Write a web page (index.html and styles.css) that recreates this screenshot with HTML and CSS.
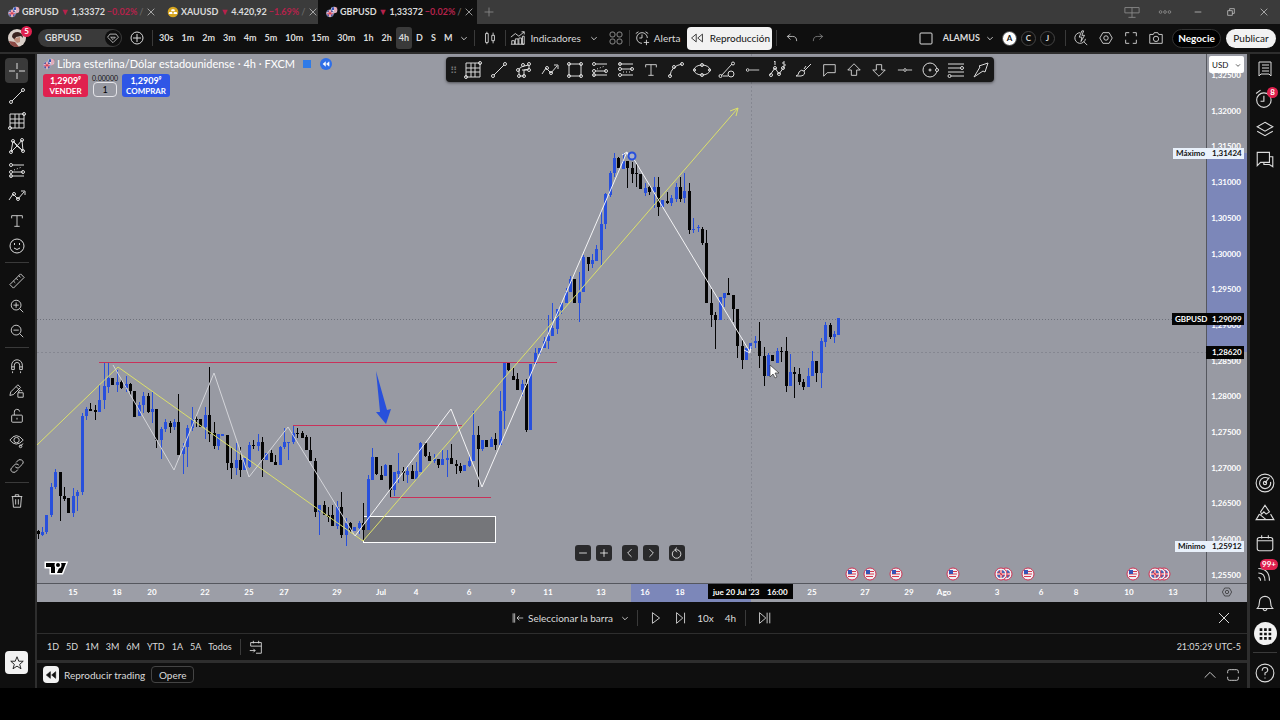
FILE: index.html
```
<!DOCTYPE html>
<html lang="es">
<head>
  <meta charset="UTF-8" />
  <title>GBPUSD 1,33372 −0.02% / ALAMUS</title>
  <meta name="viewport" content="width=device-width, initial-scale=1.0" />
  <link rel="stylesheet" href="styles.css">
</head>
<body>

  <!-- icon sprite -->
  <svg class="sprite" aria-hidden="true">
    <symbol id="close" viewBox="0 0 18 18"><path d="M4 4l10 10M14 4L4 14"/></symbol>
    <symbol id="plus" viewBox="0 0 18 18"><path d="M9 4v10M4 9h10"/></symbol>
    <symbol id="minus" viewBox="0 0 18 18"><path d="M4 9h10"/></symbol>
    <symbol id="chevron" viewBox="0 0 18 18"><path d="M6 8l3 3 3-3"/></symbol>
    <symbol id="flags" viewBox="0 0 18 18">
      <circle cx="12" cy="6" r="5" fill="#e8e8f0" stroke="none"/><path d="M12 3h5M12 6h5M12 9h4" stroke="#d8384e"/><path d="M9 2h3v4H8z" fill="#3553b5" stroke="none"/>
      <circle cx="6" cy="11" r="5.500" fill="#3d5ab0" stroke="#ddd" stroke-width=".5"/><path d="M6 6v10M1 11h10" stroke="#fff" stroke-width="3"/><path d="M6 6v10M1 11h10M3 8l6 6M9 8l-6 6" stroke="#d8384e" stroke-width="1.300"/>
    </symbol>
    <symbol id="gold" viewBox="0 0 18 18"><circle cx="9" cy="9" r="8" fill="#d6a520" stroke="none"/><path d="M7 5h4l1 3H6zM3.500 9h4l1 3h-6zM10.500 9h4l1 3h-6z" fill="#fff" stroke="none"/></symbol>
    <symbol id="gem" viewBox="0 0 18 18"><path d="M5 4h8l3 4-7 7-7-7zM6 8l3 3 3-3z"/></symbol>
    <symbol id="circle-plus" viewBox="0 0 18 18"><circle cx="9" cy="9" r="6"/><path d="M9 5v8M5 9h8"/></symbol>
    <symbol id="candles" viewBox="0 0 18 18"><path d="M4 4h3v10H4zM5.500 2v2M5.500 14v2M11 6h3v6h-3zM12.500 3v3M12.500 12v3"/></symbol>
    <symbol id="indicators" viewBox="0 0 18 18"><path d="M2 16v-4h3v4M6 16v-6h3v6M10 16V9h3v7M14 16V7h2v9zM1 8l5-4 4 3 6-5M13 2h3v3M1 16h15"/></symbol>
    <symbol id="layouts" viewBox="0 0 18 18"><rect x="3" y="3" width="5" height="5" rx="2"/><rect x="10" y="3" width="5" height="5" rx="2"/><rect x="3" y="10" width="5" height="5" rx="2"/><rect x="10" y="10" width="5" height="5" rx="2"/></symbol>
    <symbol id="alarm-add" viewBox="0 0 18 18"><path d="M15 9a6 6 0 1 0-6 6M9 5v4H6M2 4l3-2M13 2l3 2M14 11v6M11 14h6"/></symbol>
    <symbol id="rewind" viewBox="0 0 18 18"><path d="M8 4v10L2 9zM16 4v10l-6-5z"/></symbol>
    <symbol id="undo" viewBox="0 0 18 18"><path d="M7 4L3 7l4 4M3 7h7q5 0 5 6"/></symbol>
    <symbol id="redo" viewBox="0 0 18 18"><path d="M11 4l4 3-4 4M15 7H8q-5 0-5 6"/></symbol>
    <symbol id="square" viewBox="0 0 18 18"><rect x="3" y="4" width="12" height="11" rx="1"/></symbol>
    <symbol id="quick-search" viewBox="0 0 18 18"><path d="M8 3a6 6 0 1 0 6 7M12 13l4 4M10 1L7 8h3l-1 5 4-7h-3l2-5z"/></symbol>
    <symbol id="hexagon" viewBox="0 0 18 18"><path d="M5.500 3h7L16 9l-3.500 6h-7L2 9z"/><circle cx="9" cy="9" r="2.500"/></symbol>
    <symbol id="fullscreen" viewBox="0 0 18 18"><path d="M3 7V3h4M11 3h4v4M15 11v4h-4M7 15H3v-4"/></symbol>
    <symbol id="camera" viewBox="0 0 18 18"><path d="M2 5h4l1-2h4l1 2h4v10H2z"/><circle cx="9" cy="10" r="3"/></symbol>
    <symbol id="cross" viewBox="0 0 18 18"><path d="M9 1v6M9 11v6M1 9h6M11 9h6"/></symbol>
    <symbol id="trend" viewBox="0 0 18 18"><circle cx="3" cy="15" r="1.500"/><circle cx="15" cy="3" r="1.500"/><path d="M4 14L14 4"/></symbol>
    <symbol id="grid" viewBox="0 0 18 18"><path d="M2 2h14v14H2zM7 2v14M11 2v14M2 7h14M2 11h14"/><circle cx="16" cy="2" r="1.500"/><circle cx="2" cy="16" r="1.500"/></symbol>
    <symbol id="pattern" viewBox="0 0 18 18"><path d="M3 15L5 4l4 5 5-6 1 11-6-5zM5 4l10 10"/><circle cx="3" cy="15" r="1.500"/><circle cx="5" cy="4" r="1.500"/><circle cx="14" cy="3" r="1.500"/><circle cx="15" cy="14" r="1.500"/></symbol>
    <symbol id="forecast" viewBox="0 0 18 18"><path d="M4 3h12M4 10h11M2 14h14"/><path d="M6 8l8-3" stroke-dasharray="1 2"/><circle cx="3" cy="3" r="1.500"/><circle cx="3" cy="10" r="1.500"/><circle cx="15" cy="10" r="1.500"/><circle cx="3" cy="14" r="1.500"/></symbol>
    <symbol id="short-pos" viewBox="0 0 18 18"><path d="M2 3h14M4 8h11M4 14h12"/><path d="M6 11h9" stroke-dasharray="1 2"/><circle cx="3" cy="3" r="1.500"/><circle cx="3" cy="8" r="1.500"/><circle cx="15" cy="8" r="1.500"/><circle cx="3" cy="14" r="1.500"/></symbol>
    <symbol id="path" viewBox="0 0 18 18"><path d="M1 13l4-6 5 5 6-7M13 4h4v4"/><circle cx="6" cy="7" r="1.500"/><circle cx="10" cy="12" r="1.500"/></symbol>
    <symbol id="text" viewBox="0 0 18 18"><path d="M3 6V3h12v3M9 3v12M6 15h6"/></symbol>
    <symbol id="smile" viewBox="0 0 18 18"><circle cx="9" cy="9" r="7"/><path d="M6 11q3 3 6 0M6.500 6v2M11.500 6v2"/></symbol>
    <symbol id="ruler" viewBox="0 0 18 18"><path d="M1 13L13 1l4 4L5 17zM5 9l2 2M8 6l2 2M11 3l2 2"/></symbol>
    <symbol id="zoom-in" viewBox="0 0 18 18"><circle cx="8" cy="8" r="5.500"/><path d="M12 12l4 4M8 5v6M5 8h6"/></symbol>
    <symbol id="zoom-out" viewBox="0 0 18 18"><circle cx="8" cy="8" r="5.500"/><path d="M12 12l4 4M5 8h6"/></symbol>
    <symbol id="magnet" viewBox="0 0 18 18"><path d="M3 13V8a6 6 0 0 1 12 0v5h-3V8a3 3 0 0 0-6 0v5zM3 10h3M12 10h3M4 15v2M13 15v2"/></symbol>
    <symbol id="pencil-lock" viewBox="0 0 18 18"><path d="M1 14l1-4 8-8 3 3-8 8zM8 4l3 3M10 11h6v5h-6zM11 11V9q2-2 4 0"/></symbol>
    <symbol id="lock" viewBox="0 0 18 18"><rect x="3" y="8" width="12" height="8" rx="1"/><path d="M6 8V5a3 3 0 0 1 6-1M9 11v2"/></symbol>
    <symbol id="eye" viewBox="0 0 18 18"><path d="M1 8q7-10 15 0-8 9-15 0zM12 15l4-3"/><circle cx="8.500" cy="8" r="3"/><circle cx="13" cy="15" r="1.500"/></symbol>
    <symbol id="link" viewBox="0 0 18 18"><path d="M8 5l3-3q3-1 5 2 0 2-1 3l-4 4q-2 1-4-1M10 13l-3 3q-3 1-5-2 0-2 1-3l4-4q2-1 4 1"/></symbol>
    <symbol id="trash" viewBox="0 0 18 18"><path d="M3 4h12M7 4V2h4v2M4 4l1 12h8l1-12M7.500 7v6M10.500 7v6"/></symbol>
    <symbol id="star" viewBox="0 0 18 18"><path d="M9 2l2 5h5l-4 3.500 1.500 5L9 12.500l-4.500 3 1.500-5L2 7h5z"/></symbol>
    <symbol id="flowchart" viewBox="0 0 18 18"><path d="M4 14V9q0-3 5-4l5-1v4l-5 1v6H4M7 9h5"/><circle cx="8" cy="4" r="1.500"/><circle cx="14" cy="3" r="1.500"/><circle cx="14" cy="9" r="1.500"/><circle cx="3" cy="9" r="1.500"/><circle cx="4" cy="15" r="1.500"/><circle cx="9" cy="15" r="1.500"/></symbol>
    <symbol id="rect" viewBox="0 0 18 18"><path d="M3 3h12v12H3z"/><circle cx="3" cy="3" r="1.500"/><circle cx="15" cy="3" r="1.500"/><circle cx="3" cy="15" r="1.500"/><circle cx="15" cy="15" r="1.500"/></symbol>
    <symbol id="curve" viewBox="0 0 18 18"><path d="M3 15Q4 5 15 3"/><circle cx="3" cy="15" r="1.500"/><circle cx="7" cy="6" r="1.500"/><circle cx="15" cy="3" r="1.500"/></symbol>
    <symbol id="ellipse" viewBox="0 0 18 18"><ellipse cx="9" cy="9" rx="8" ry="5"/><circle cx="1.500" cy="9" r="1.200"/><circle cx="16.500" cy="9" r="1.200"/><circle cx="9" cy="4" r="1.500"/><circle cx="9" cy="14" r="1.500"/></symbol>
    <symbol id="trend-angle" viewBox="0 0 18 18"><path d="M3 15L14 3M5 15h5"/><circle cx="2.500" cy="15" r="1.500"/><circle cx="15" cy="2.500" r="1.500"/><circle cx="13" cy="13" r="3"/></symbol>
    <symbol id="ray" viewBox="0 0 18 18"><circle cx="3" cy="9" r="1.500"/><path d="M5 9h11"/></symbol>
    <symbol id="elliott" viewBox="0 0 18 18"><path d="M1 14l5-7 4 6 5-7M5 1l1-1v4M14 1h2M14 1v2h2v2h-2"/><circle cx="2" cy="14" r="1.500"/><circle cx="6" cy="7" r="1.500"/><circle cx="10" cy="13" r="1.500"/><circle cx="14" cy="7" r="1.500"/></symbol>
    <symbol id="brush" viewBox="0 0 18 18"><path d="M2 15q3-1 3-4 2-3 5-1 2 4-3 5zM10 10l7-7M10 8l2-3"/></symbol>
    <symbol id="callout" viewBox="0 0 18 18"><path d="M3 3h13v9H7l-4 4z"/></symbol>
    <symbol id="arrow-up" viewBox="0 0 18 18"><path d="M9 2l7 7h-4v6H6V9H2z"/></symbol>
    <symbol id="arrow-down" viewBox="0 0 18 18"><path d="M9 16l7-7h-4V3H6v6H2z"/></symbol>
    <symbol id="hline" viewBox="0 0 18 18"><circle cx="9" cy="9" r="1.500"/><path d="M1 9h6M11 9h6"/></symbol>
    <symbol id="circle-tool" viewBox="0 0 18 18"><circle cx="9" cy="9" r="7"/><circle cx="9" cy="9" r="1"/><circle cx="16" cy="9" r="1.500" fill="#181818"/></symbol>
    <symbol id="fib" viewBox="0 0 18 18"><path d="M1 3h16M1 7h13M1 11h16M4 15h13"/><circle cx="15" cy="7" r="1.500"/><circle cx="2.500" cy="15" r="1.500"/></symbol>
    <symbol id="arrow-draw" viewBox="0 0 18 18"><path d="M2 16l6-10-1-1 9-3-3 9-2-1z"/></symbol>
    <symbol id="notes" viewBox="0 0 18 18"><path d="M3 2h12v14l-2-2h-8l-2 2zM6 5h7M6 8h7M6 11h7"/></symbol>
    <symbol id="alarm" viewBox="0 0 18 18"><circle cx="8" cy="10" r="6.500"/><path d="M8 6v5H5M1 4l4-3M12 1l4 3"/></symbol>
    <symbol id="layers" viewBox="0 0 18 18"><path d="M9 3l7 4-7 4-7-4zM2 11l7 4 7-4"/></symbol>
    <symbol id="chats" viewBox="0 0 18 18"><path d="M2 3h11v9H5l-3 3zM13 7h3v9l-3-2H8v-2"/></symbol>
    <symbol id="target" viewBox="0 0 18 18"><circle cx="9" cy="9" r="8"/><path d="M12 5a5 5 0 1 0 2 3M9 9l4-5"/><circle cx="9" cy="9" r="1.500"/></symbol>
    <symbol id="pyramid" viewBox="0 0 18 18"><path d="M9 2l4 6-3 2-2-2-2 2-1-2zM4 10l-3 5h16l-3-5M4 10l6 5"/></symbol>
    <symbol id="calendar" viewBox="0 0 18 18"><rect x="2" y="4" width="14" height="12" rx="2"/><path d="M2 7h14M6 2v3M12 2v3"/></symbol>
    <symbol id="stream" viewBox="0 0 18 18"><path d="M3 13q2 0 2 3M3 9q6 0 6 7M3 5q10 0 10 11"/></symbol>
    <symbol id="bell" viewBox="0 0 18 18"><path d="M2 14q2-2 2-6a5 5 0 0 1 10 0q0 4 2 6zM7 14q2 4 4 0"/></symbol>
    <symbol id="apps" viewBox="0 0 18 18"><path d="M3 4h3M8 4h3M13 4h3M3 9h3M8 9h3M13 9h3M3 14h3M8 14h3M13 14h3" stroke-width="3"/></symbol>
    <symbol id="help" viewBox="0 0 18 18"><circle cx="9" cy="9" r="8"/><path d="M6.500 7q0-3 2.500-3t2.500 2.500Q11.500 8 9 9v2M9 13v1"/></symbol>
    <symbol id="select-bar" viewBox="0 0 18 18"><path d="M4 3v12M6 3v12M17 9H9M12 6L9 9l3 3"/></symbol>
    <symbol id="play" viewBox="0 0 18 18"><path d="M5 3v12l8-6z"/></symbol>
    <symbol id="step" viewBox="0 0 18 18"><path d="M4 3v12l7-6zM13 3v12"/></symbol>
    <symbol id="to-end" viewBox="0 0 18 18"><path d="M4 3v12l7-6zM12.500 3v12M15.500 3v12"/></symbol>
    <symbol id="goto" viewBox="0 0 18 18"><path d="M3 8V4h12v12h-6M3 8h12M6 2v3M12 2v3M2 13h6M6 11l2 2-2 2"/></symbol>
    <symbol id="left" viewBox="0 0 18 18"><path d="M11 4L6 9l5 5"/></symbol>
    <symbol id="right" viewBox="0 0 18 18"><path d="M7 4l5 5-5 5"/></symbol>
    <symbol id="reset" viewBox="0 0 18 18"><path d="M5 6a5.500 5.500 0 1 0 5-1H6M9 2L6 5l3 3"/></symbol>
    <symbol id="up" viewBox="0 0 18 18"><path d="M3 12l6-6 6 6"/></symbol>
    <symbol id="maximize" viewBox="0 0 18 18"><path d="M3 7V5q0-2 2-2h2M11 3h2q2 0 2 2v2M15 11v2q0 2-2 2h-2M7 15H5q-2 0-2-2v-2M7 3h4M7 15h4"/></symbol>
    <symbol id="split" viewBox="0 0 18 18"><path d="M1 4h16v6H1zM9 4v11M5 15h8"/></symbol>
    <symbol id="dots" viewBox="0 0 18 18"><circle cx="4" cy="9" r="1.500"/><circle cx="9" cy="9" r="1.500"/><circle cx="14" cy="9" r="1.500"/></symbol>
    <symbol id="restore" viewBox="0 0 18 18"><path d="M4 7h7v7H4zM7 7V4h7v7h-3"/></symbol>
  </svg>

  <div class="window">
    <header class="tabs">
      <div class="tab">
        <svg class="coin"><use href="#flags"/></svg><span>GBPUSD</span><span class="down">▼</span><span>1,33372</span><span class="down">−0.02%</span><span class="fade">/</span>
        <button class="tab-close" aria-label="Cerrar"><svg><use href="#close"/></svg></button>
      </div>
      <div class="tab">
        <svg class="coin"><use href="#gold"/></svg><span>XAUUSD</span><span class="down">▼</span><span>4.420,92</span><span class="down">−1.69%</span><span class="fade">/</span>
        <button class="tab-close" aria-label="Cerrar"><svg><use href="#close"/></svg></button>
      </div>
      <div class="tab active">
        <svg class="coin"><use href="#flags"/></svg><span>GBPUSD</span><span class="down">▼</span><span>1,33372</span><span class="down">−0.02%</span><span class="fade">/</span>
        <button class="tab-close" aria-label="Cerrar"><svg><use href="#close"/></svg></button>
      </div>
      <button class="new-tab" aria-label="Nueva pestaña"><svg><use href="#plus"/></svg></button>
      <div class="window-buttons">
        <button class="dim" aria-label="Dividir"><svg><use href="#split"/></svg></button>
        <button class="dim" aria-label="Más"><svg><use href="#dots"/></svg></button>
        <button aria-label="Minimizar"><svg class="i12"><use href="#minus"/></svg></button>
        <button aria-label="Restaurar"><svg class="i12"><use href="#restore"/></svg></button>
        <button aria-label="Cerrar ventana"><svg class="i12"><use href="#close"/></svg></button>
      </div>
    </header>

    <div class="toolbar">
      <button class="avatar" aria-label="Perfil">
        <svg class="i18" viewBox="0 0 18 18"><circle cx="9" cy="9" r="9" fill="#d9cfc8" stroke="none"/><path d="M4 8q0-5 6-5 5 1 5 6l-2-2-5 1-1 3z" fill="#3a2320" stroke="none"/><path d="M7 9l5-1v5l-3 1-3-3z" fill="#c08f7c" stroke="none"/><path d="M1 12l6 1 4 5q-8 1-10-6z" fill="#8c4a45" stroke="none"/></svg>
        <span class="badge">5</span>
      </button>
      <button class="symbol">GBPUSD<span class="gem"><svg class="i14"><use href="#gem"/></svg></span></button>
      <button class="icon" aria-label="Comparar"><svg class="i18"><use href="#circle-plus"/></svg></button>
      <i class="sep"></i>
      <div class="frames">
        <button>30s</button><button>1m</button><button>2m</button><button>3m</button><button>4m</button><button>5m</button><button>10m</button><button>15m</button><button>30m</button><button>1h</button><button>2h</button><button class="on">4h</button><button>D</button><button>S</button><button>M</button>
      </div>
      <button class="icon small" aria-label="Intervalos"><svg><use href="#chevron"/></svg></button>
      <i class="sep"></i>
      <button class="icon" aria-label="Velas"><svg><use href="#candles"/></svg></button>
      <i class="sep"></i>
      <button class="label"><svg><use href="#indicators"/></svg>Indicadores</button>
      <button class="icon mid" aria-label="Favoritos"><svg><use href="#chevron"/></svg></button>
      <button class="icon mid dim" aria-label="Plantillas"><svg class="i18"><use href="#layouts"/></svg></button>
      <i class="sep"></i>
      <button class="label"><svg><use href="#alarm-add"/></svg>Alerta</button>
      <button class="replay"><svg class="i14"><use href="#rewind"/></svg>Reproducción</button>
      <i class="sep"></i>
      <button class="icon" aria-label="Deshacer"><svg class="i14"><use href="#undo"/></svg></button>
      <button class="icon dim" aria-label="Rehacer"><svg class="i14"><use href="#redo"/></svg></button>
      <div class="toolbar-right">
        <button class="icon" aria-label="Diseño"><svg class="i18"><use href="#square"/></svg></button>
        <button class="name">ALAMUS</button>
        <button class="icon small" aria-label="Diseños"><svg><use href="#chevron"/></svg></button>
        <button class="round white">A</button>
        <button class="round">C</button>
        <button class="round">J</button>
        <i class="sep"></i>
        <button class="icon" aria-label="Búsqueda rápida"><svg><use href="#quick-search"/></svg></button>
        <button class="icon" aria-label="Ajustes"><svg><use href="#hexagon"/></svg></button>
        <button class="icon" aria-label="Pantalla completa"><svg><use href="#fullscreen"/></svg></button>
        <button class="icon" aria-label="Captura"><svg><use href="#camera"/></svg></button>
        <button class="trade">Negocie</button>
        <button class="publish">Publicar</button>
      </div>
    </div>

    <div class="workspace">
      <aside class="tools">
        <button class="on" aria-label="Cruz"><svg class="i18"><use href="#cross"/></svg></button>
        <button aria-label="Línea"><svg class="i18"><use href="#trend"/></svg></button>
        <button aria-label="Gann"><svg class="i18"><use href="#grid"/></svg></button>
        <button aria-label="Patrones"><svg class="i18"><use href="#pattern"/></svg></button>
        <button aria-label="Previsión"><svg class="i18"><use href="#forecast"/></svg></button>
        <button aria-label="Trazado"><svg class="i18"><use href="#path"/></svg></button>
        <button aria-label="Texto"><svg><use href="#text"/></svg></button>
        <button aria-label="Iconos"><svg class="i18"><use href="#smile"/></svg></button>
        <hr>
        <button aria-label="Medir"><svg><use href="#ruler"/></svg></button>
        <button aria-label="Acercar"><svg><use href="#zoom-in"/></svg></button>
        <button aria-label="Alejar"><svg><use href="#zoom-out"/></svg></button>
        <hr>
        <button aria-label="Imán"><svg><use href="#magnet"/></svg></button>
        <button aria-label="Modo dibujo"><svg><use href="#pencil-lock"/></svg></button>
        <button aria-label="Bloquear"><svg><use href="#lock"/></svg></button>
        <button aria-label="Ocultar"><svg><use href="#eye"/></svg></button>
        <button aria-label="Enlazar"><svg><use href="#link"/></svg></button>
        <hr>
        <button aria-label="Eliminar"><svg><use href="#trash"/></svg></button>
        <button class="fav" aria-label="Favoritos"><svg><use href="#star"/></svg></button>
      </aside>

      <main>
        <div class="chart">
          <svg id="chart" class="plot" viewBox="37 54 1210 548">
            <rect class="axis-bg" x="37" y="583" width="1210" height="19"/>
            <rect class="range" x="1207" y="153" width="40" height="199"/>
            <rect class="range" x="631" y="584" width="120" height="18"/>
            <path class="cross" d="M751.500 54v529M37 352.500h1170"/>
            <path class="last" d="M37 319.500h1135"/>
            <rect class="box" x="363.500" y="516.500" width="132" height="26"/>
            <g id="candles-layer"></g>
            <path class="level" d="M99 362.500h458"/>
            <path class="level" d="M293 425.500h169"/>
            <path class="level" d="M390 497.500h101"/>
            <path class="yellow" d="M37 445l81-78 245 174L738 108M730 111l8-3-2 8"/>
            <path class="white thin" d="M113 365l61 105 40-97 35 104 39-50 67 109"/>
            <path class="white" d="M355 536l96-127 31 78 145-335M622 155l5-3 2 6M632 156l118 196M744 350l6 3 1-7"/>
            <path class="blue-arrow" d="M376 371l11 39 4-1-5 15-10-12h4z"/>
            <circle class="handle" cx="632" cy="156" r="3.500"/>
            <path d="M770 365v12l3-3 2 4 2-1-2-4h4z" fill="#fff" stroke="#333" stroke-width=".7"/>
            <path class="brand" d="M46 563h9v10h-4v-6h-5zM61 563h5l-4 10h-5z"/>
            <circle class="brand" cx="58" cy="565" r="2"/>
            <g id="events"></g>
            <path class="axis-line" d="M1206.500 54v548M37 583.500h1210"/>
            <g id="prices" class="axis"></g>
            <g id="dates" class="axis"></g>
            <g class="tag light"><rect x="1173" y="148" width="71" height="11"/><text x="1176" y="156">Máximo</text><text x="1212" y="156">1,31424</text></g>
            <g class="tag"><rect x="1172" y="313" width="72" height="12"/><text x="1175" y="322">GBPUSD</text><text x="1212" y="322">1,29099</text></g>
            <g class="tag"><rect x="1206" y="346" width="38" height="13"/><text x="1212" y="355">1,28620</text></g>
            <g class="tag light"><rect x="1175" y="541" width="69" height="11"/><text x="1178" y="549">Mínimo</text><text x="1212" y="549">1,25912</text></g>
            <g class="tag"><rect x="708" y="584" width="85" height="15"/><text x="713" y="595">jue 20 Jul '23</text><text x="767" y="595">16:00</text></g>
            <use href="#hexagon" x="1221" y="586" width="12" height="12" class="axis-gear"/>
          </svg>

          <div class="legend">
            <div class="legend-title"><svg class="coin"><use href="#flags"/></svg><span>Libra esterlina/Dólar estadounidense · 4h · FXCM</span><i class="flag"></i><i class="back"><svg><use href="#rewind"/></svg></i></div>
            <div class="order">
              <button class="sell">1,2909⁹<span>VENDER</span></button>
              <label class="qty">0.00000<input type="text" value="1"></label>
              <button class="buy">1,2909⁹<span>COMPRAR</span></button>
            </div>
          </div>

          <div class="drawbar">
            <span class="grip">⠿</span>
            <button aria-label="Gann"><svg class="i18"><use href="#grid"/></svg></button>
            <button aria-label="Línea"><svg class="i18"><use href="#trend"/></svg></button>
            <button aria-label="Forma"><svg class="i18"><use href="#flowchart"/></svg></button>
            <button aria-label="Trazado"><svg class="i18"><use href="#path"/></svg></button>
            <button aria-label="Rectángulo"><svg class="i18"><use href="#rect"/></svg></button>
            <button aria-label="Posición larga"><svg class="i18"><use href="#forecast"/></svg></button>
            <button aria-label="Posición corta"><svg class="i18"><use href="#short-pos"/></svg></button>
            <button aria-label="Texto"><svg><use href="#text"/></svg></button>
            <button aria-label="Curva"><svg class="i18"><use href="#curve"/></svg></button>
            <button aria-label="Elipse"><svg class="i18"><use href="#ellipse"/></svg></button>
            <button aria-label="Ángulo"><svg class="i18"><use href="#trend-angle"/></svg></button>
            <button aria-label="Rayo"><svg><use href="#ray"/></svg></button>
            <button aria-label="Elliott"><svg class="i18"><use href="#elliott"/></svg></button>
            <button aria-label="Pincel"><svg class="i18"><use href="#brush"/></svg></button>
            <button aria-label="Nota"><svg><use href="#callout"/></svg></button>
            <button aria-label="Flecha arriba"><svg><use href="#arrow-up"/></svg></button>
            <button aria-label="Flecha abajo"><svg><use href="#arrow-down"/></svg></button>
            <button aria-label="Horizontal"><svg><use href="#hline"/></svg></button>
            <button aria-label="Círculo"><svg class="i18"><use href="#circle-tool"/></svg></button>
            <button aria-label="Fibonacci"><svg class="i18"><use href="#fib"/></svg></button>
            <button aria-label="Flecha"><svg class="i18"><use href="#arrow-draw"/></svg></button>
          </div>

          <div class="currency">
            <select aria-label="Divisa"><option>USD</option></select>
            <svg class="i12"><use href="#chevron"/></svg>
          </div>

          <div class="chart-nav">
            <button aria-label="Alejar"><svg><use href="#minus"/></svg></button>
            <button aria-label="Acercar"><svg><use href="#plus"/></svg></button>
            <button class="gap" aria-label="Izquierda"><svg><use href="#left"/></svg></button>
            <button aria-label="Derecha"><svg><use href="#right"/></svg></button>
            <button class="gap" aria-label="Restablecer"><svg><use href="#reset"/></svg></button>
          </div>
        </div>

        <div class="replay-bar">
          <div class="replay-controls">
            <button class="label"><svg class="i14"><use href="#select-bar"/></svg>Seleccionar la barra</button>
            <button class="drop" aria-label="Opciones"><svg><use href="#chevron"/></svg></button>
            <i class="sep"></i>
            <button aria-label="Reproducir"><svg><use href="#play"/></svg></button>
            <button aria-label="Avanzar"><svg><use href="#step"/></svg></button>
            <button>10x</button>
            <button>4h</button>
            <i class="sep wide"></i>
            <button aria-label="Ir al final"><svg><use href="#to-end"/></svg></button>
          </div>
          <button class="replay-close" aria-label="Cerrar"><svg class="i18"><use href="#close"/></svg></button>
        </div>

        <div class="range-bar">
          <button>1D</button><button>5D</button><button>1M</button><button>3M</button><button>6M</button><button>YTD</button><button>1A</button><button>5A</button><button>Todos</button>
          <i class="sep"></i>
          <button aria-label="Ir a"><svg><use href="#goto"/></svg></button>
          <button class="clock">21:05:29 UTC-5</button>
        </div>

        <div class="trading-bar">
          <span class="trading-icon"><svg><use href="#rewind"/></svg></span>
          <span>Reproducir trading</span>
          <button class="opere">Opere</button>
          <div class="panel-buttons">
            <button aria-label="Abrir panel"><svg><use href="#up"/></svg></button>
            <button aria-label="Maximizar"><svg><use href="#maximize"/></svg></button>
          </div>
        </div>
      </main>

      <aside class="side">
        <button aria-label="Lista"><svg class="i18"><use href="#notes"/></svg></button>
        <button aria-label="Alertas"><svg class="i20"><use href="#alarm"/></svg><span class="badge">8</span></button>
        <button aria-label="Capas"><svg class="i20"><use href="#layers"/></svg></button>
        <button aria-label="Chats"><svg class="i20"><use href="#chats"/></svg></button>
        <span class="spacer"></span>
        <button aria-label="Filtro"><svg class="i20"><use href="#target"/></svg></button>
        <button aria-label="Pine"><svg class="i20"><use href="#pyramid"/></svg></button>
        <button aria-label="Calendario"><svg class="i20"><use href="#calendar"/></svg></button>
        <button aria-label="Ideas"><svg class="i20"><use href="#stream"/></svg><span class="badge wide">99+</span></button>
        <button aria-label="Notificaciones"><svg class="i20"><use href="#bell"/></svg></button>
        <button class="apps" aria-label="Productos"><svg><use href="#apps"/></svg></button>
        <hr>
        <button aria-label="Ayuda"><svg class="i20"><use href="#help"/></svg></button>
      </aside>
    </div>
  </div>

  <script src="script.js"></script>
</body>
</html>
```
FILE: styles.css
```
*, *::before, *::after {
  box-sizing: border-box;
}

:root {
  --bg: #0f0f0f;
  --line: #2e2e2e;
  --text: #dbdbdb;
  --blue: #2f56e6;
  --red: #e0214f;
  --plot: #989aa3;
}

body {
  margin: 0;
  background: #000;
  color: var(--text);
  font-family: Lato, "Open Sans", sans-serif;
  font-size: 10px;
  line-height: 12px;
}

button {
  display: flex;
  align-items: center;
  justify-content: center;
  padding: 0;
  border: none;
  background: none;
  color: inherit;
  font: inherit;
  white-space: nowrap;
  cursor: pointer;
}

svg {
  width: 16px;
  height: 16px;
  flex: none;
  fill: none;
  stroke: currentColor;
  stroke-width: 1;
}

.sprite {
  position: absolute;
  width: 0;
  height: 0;
}

.i12 { width: 12px; height: 12px; }
.i14 { width: 14px; height: 14px; }
.i18 { width: 18px; height: 18px; }
.i20 { width: 20px; height: 20px; }
.dim { color: #8a8a8a; }

/* window tabs */
.tabs {
  display: flex;
  height: 24px;
  background: #3b3b3b;
}

.tab {
  display: flex;
  align-items: center;
  gap: 2px;
  width: 159px;
  padding: 0 3px 0 8px;
  font-size: 9px;
  font-weight: bold;
}

.tab.active {
  background: var(--bg);
}

.coin {
  width: 12px;
  height: 12px;
}

.down { color: #b5224b; }
.fade { color: #666; }

.tab-close {
  margin-left: auto;
}

.tab-close svg {
  width: 12px;
  height: 12px;
}

.new-tab {
  width: 24px;
  color: #888;
}

.window-buttons {
  display: flex;
  margin-left: auto;
}

.window-buttons button {
  width: 33px;
}

/* top toolbar */
.toolbar {
  display: flex;
  align-items: center;
  height: 30px;
  padding: 0 4px 0 8px;
  background: var(--bg);
  border-bottom: 2px solid var(--line);
  font-weight: bold;
}

.avatar {
  position: relative;
  margin-right: 12px;
}

.badge {
  position: absolute;
  top: -3px;
  right: -6px;
  min-width: 11px;
  padding: 0 2px;
  border-radius: 6px;
  background: var(--red);
  color: #fff;
  font-size: 8px;
  line-height: 11px;
  text-align: center;
}

.symbol {
  justify-content: space-between;
  width: 84px;
  height: 18px;
  margin-right: 2px;
  padding: 0 1px 0 7px;
  border-radius: 9px;
  background: #3a3a3a;
  font-size: 9px;
}

.gem {
  display: flex;
  align-items: center;
  justify-content: center;
  width: 16px;
  height: 16px;
  border-radius: 50%;
  background: var(--bg);
}

.icon {
  width: 26px;
  height: 20px;
}

.icon.mid {
  width: 22px;
}

.icon.small {
  width: 16px;
}

.sep {
  width: 1px;
  height: 16px;
  margin: 0 2px;
  background: #3a3a3a;
}

.frames {
  display: flex;
  font-size: 9px;
}

.frames button {
  height: 22px;
  padding: 0 4px;
}

.frames .on {
  padding: 0 3px;
  border-radius: 3px;
  background: #3a3a3a;
}

.label {
  gap: 4px;
  padding: 0 2px;
}

.toolbar .label {
  font-weight: normal;
}

.replay {
  gap: 6px;
  width: 85px;
  height: 23px;
  margin: 0 2px 0 5px;
  border-radius: 4px;
  background: #f2f2f2;
  color: #111;
  font-weight: normal;
}

.toolbar-right {
  display: flex;
  align-items: center;
  margin-left: auto;
}

.toolbar-right .icon {
  width: 25px;
}

.toolbar-right .small {
  width: 20px;
}

.name {
  margin-left: 4px;
  font-size: 9px;
}

.round {
  width: 15px;
  height: 15px;
  margin: 0 2px;
  border: 1px solid #444;
  border-radius: 50%;
  font-size: 8px;
}

.round.white {
  background: #fff;
  color: #111;
}

.toolbar-right .sep {
  margin: 0 2px 0 8px;
}

.trade, .publish {
  height: 19px;
  border-radius: 10px;
}

.trade {
  width: 49px;
  margin-left: 4px;
  border: 1px solid #333;
  background: #000;
  color: #fff;
}

.publish {
  width: 50px;
  margin-left: 5px;
  background: #f2f2f2;
  color: #111;
  font-weight: normal;
}

/* workspace */
.workspace {
  display: flex;
}

.tools {
  display: flex;
  flex-direction: column;
  align-items: center;
  width: 37px;
  padding: 4px 2px 14px 0;
  border-right: 2px solid var(--line);
  background: var(--bg);
}

.tools button {
  width: 23px;
  height: 25px;
}

.tools .on {
  border-radius: 4px;
  background: #3a3a3a;
}

.tools hr, .side hr {
  width: 24px;
  margin: 4px 0 5px;
  border: none;
  border-top: 1px solid #3a3a3a;
}

.tools .fav {
  height: 23px;
  margin-top: auto;
  border-radius: 4px;
  background: #f2f2f2;
  color: #111;
}

main {
  flex: 1;
  min-width: 0;
  background: var(--bg);
}

.chart {
  position: relative;
}

.plot {
  display: block;
  width: 100%;
  height: auto;
  background: var(--plot);
}

.plot text {
  stroke: none;
  font-size: 8px;
}

.axis-bg { fill: #9c9ea7; stroke: none; }
.range { fill: #7c87b9; stroke: none; }
.cross { stroke: #858791; stroke-dasharray: 2 2; }
.last { stroke: #6d707a; stroke-dasharray: 1 2; }
.box { fill: #75767a; stroke: #fff; }
.level { stroke: #c8325a; }
.yellow { stroke: #dce06a; }
.white { stroke: #f4f4f6; }
.white.thin { stroke: #d4d5da; }
.blue-arrow { fill: #2850dc; stroke: none; }
.handle { fill: #aab0c8; stroke: #2850dc; stroke-width: 2; }
.brand { fill: #000; stroke: #fff; stroke-width: 3; paint-order: stroke; }
.axis-line { stroke: #55575e; }
.axis { fill: #fff; text-anchor: middle; font-weight: bold; }
.axis-gear { color: #222; stroke: #222; }
.up { fill: #2850dc; stroke: #2850dc; }
.dn { fill: #050505; stroke: #050505; }
.up rect, .dn rect { stroke: none; }

.tag rect { fill: #050505; stroke: none; }
.tag text { fill: #fff; font-weight: bold; }
.tag.light rect { fill: #e9f1fb; }
.tag.light text { fill: #111; }

.legend {
  position: absolute;
  top: 4px;
  left: 6px;
  color: #fff;
}

.legend-title {
  display: flex;
  align-items: center;
  gap: 2px;
  font-size: 11px;
}

.flag {
  width: 8px;
  height: 8px;
  margin-left: 6px;
  background: #2f7be8;
}

.back {
  display: flex;
  align-items: center;
  justify-content: center;
  width: 12px;
  height: 12px;
  margin-left: 7px;
  border-radius: 50%;
  background: #2f6fe8;
}

.back svg {
  width: 8px;
  height: 8px;
  fill: #fff;
}

.order {
  display: flex;
  align-items: flex-start;
  gap: 5px;
  margin-top: 4px;
}

.sell, .buy {
  flex-direction: column;
  width: 45px;
  height: 23px;
  border-radius: 3px;
  background: var(--red);
  font-size: 9px;
  font-weight: bold;
  line-height: 10px;
}

.sell span, .buy span {
  font-size: 8px;
}

.buy {
  width: 48px;
  background: var(--blue);
}

.qty {
  display: flex;
  flex-direction: column;
  align-items: center;
  width: 24px;
  color: #111;
  font-size: 7px;
  line-height: 8px;
}

.qty input {
  width: 24px;
  height: 15px;
  padding: 0;
  border: 1px solid #e4e4e8;
  border-radius: 4px;
  background: none;
  font: inherit;
  font-size: 9px;
  text-align: center;
}

.drawbar {
  position: absolute;
  top: 3px;
  left: 409px;
  display: flex;
  align-items: center;
  justify-content: space-between;
  width: 548px;
  height: 25px;
  padding: 0 4px;
  border-radius: 4px;
  background: #181818;
  box-shadow: 0 1px 3px rgba(0, 0, 0, 0.5);
}

.drawbar button {
  width: 18px;
}

.grip {
  color: #777;
}

.currency {
  position: absolute;
  top: 2px;
  right: 3px;
  display: flex;
  align-items: center;
  width: 35px;
  height: 17px;
  border-radius: 2px;
  background: #fff;
  color: #111;
}

.currency select {
  width: 23px;
  padding: 0 0 0 3px;
  border: none;
  background: none;
  color: inherit;
  font: inherit;
  font-size: 8px;
  appearance: none;
}

.chart-nav {
  position: absolute;
  bottom: 41px;
  left: 49%;
  display: flex;
  gap: 5px;
  transform: translateX(-50%);
}

.chart-nav button {
  width: 16px;
  height: 16px;
  border-radius: 3px;
  background: #2a2a2c;
  color: #fff;
}

.chart-nav svg {
  width: 14px;
  height: 14px;
}

.chart-nav .gap {
  margin-left: 5px;
}

.replay-bar {
  display: grid;
  grid-template-columns: 1fr auto 1fr;
  align-items: center;
  height: 32px;
  border-bottom: 1px solid var(--line);
}

.replay-controls {
  grid-column: 2;
  display: flex;
  align-items: center;
}

.replay-controls button {
  min-width: 25px;
}

.replay-controls .drop {
  min-width: 20px;
}

.replay-controls .sep {
  margin: 0 5px 0 2px;
}

.replay-close {
  justify-self: end;
  margin-right: 14px;
}

.range-bar {
  display: flex;
  align-items: center;
  height: 29px;
  padding: 0 6px;
  border-bottom: 3px solid var(--line);
  font-size: 9px;
}

.range-bar button {
  padding: 0 3px 0 4px;
}

.range-bar .sep {
  margin: 0 3px 0 5px;
}

.range-bar .clock {
  margin-left: auto;
  padding: 0;
}

.trading-bar {
  display: flex;
  align-items: center;
  height: 25px;
  padding: 0 6px 2px;
}

.trading-icon {
  display: flex;
  align-items: center;
  justify-content: center;
  width: 16px;
  height: 17px;
  margin-right: 5px;
  border-radius: 4px;
  background: #f2f2f2;
  color: #111;
}

.trading-icon svg {
  width: 12px;
  height: 12px;
  fill: #111;
}

.opere {
  width: 43px;
  height: 17px;
  margin-left: 6px;
  border: 1px solid #444;
  border-radius: 4px;
}

.panel-buttons {
  display: flex;
  gap: 7px;
  margin-left: auto;
}

.side {
  display: flex;
  flex-direction: column;
  align-items: center;
  width: 33px;
  border-left: 3px solid var(--line);
  background: var(--bg);
}

.side button {
  position: relative;
  width: 24px;
  height: 30px;
}

.side .badge {
  top: 3px;
  right: -1px;
  font-weight: bold;
}

.side .badge.wide {
  top: 1px;
}

.side .spacer {
  flex: 1;
}

.side .apps {
  height: 23px;
  width: 23px;
  margin: 4px 0 3px;
  border-radius: 50%;
  background: #f2f2f2;
  color: #111;
}
```
FILE: script.js
```
// each candle: high, body top, body bottom, low, 1 = up / 0 = down
const candles = [
  [530,531,534,539,0],[527,532,535,536,1],[515,515,532,534,1],[483,487,515,517,1],[469,472,487,489,1],
  [472,472,496,521,0],[487,496,499,501,0],[498,498,513,513,0],[488,496,513,517,1],[490,492,496,511,1],
  [413,416,492,495,1],[407,409,416,420,1],[403,409,411,411,0],[405,410,412,420,0],[385,400,412,412,1],
  [362,386,400,409,1],[362,378,387,393,1],[378,378,385,385,0],[370,382,385,392,1],[379,382,388,389,0],
  [376,384,388,392,1],[383,384,391,395,0],[391,391,417,417,0],[402,405,416,416,1],[392,396,405,413,1],
  [393,396,412,413,0],[392,409,412,423,1],[409,409,440,448,0],[427,429,440,459,1],[419,422,429,432,1],
  [421,423,427,433,0],[419,422,427,430,1],[394,422,455,455,0],[443,447,454,474,1],[425,428,447,467,1],
  [407,419,428,431,1],[415,419,420,427,0],[419,419,427,427,0],[407,415,427,439,1],[367,415,434,442,0],
  [422,433,446,449,0],[434,434,446,450,1],[434,434,436,436,1],[435,435,463,470,0],[447,463,468,479,0],
  [443,460,468,475,1],[447,460,470,477,0],[458,458,470,470,1],[442,445,467,468,1],[440,445,446,449,0],
  [434,442,446,451,1],[437,442,460,477,0],[453,453,460,460,1],[450,453,462,462,0],[455,462,465,465,0],
  [446,447,465,465,1],[428,442,447,449,1],[442,442,443,460,1],[425,433,442,444,1],[428,433,434,438,0],
  [431,433,438,438,0],[435,437,450,450,0],[437,450,461,461,0],[458,461,512,517,0],[505,505,512,535,1],
  [501,505,515,515,0],[507,515,517,522,0],[505,515,526,526,0],[501,507,526,529,1],[492,507,535,538,0],
  [518,523,535,546,1],[522,523,530,532,0],[527,527,531,531,1],[521,523,528,534,1],[503,523,530,540,0],
  [475,479,530,530,1],[448,457,480,480,1],[457,457,474,475,0],[466,475,480,480,0],[464,465,476,476,1],
  [465,465,490,498,0],[472,472,490,496,1],[453,471,474,483,1],[467,471,473,481,0],[467,471,475,483,1],
  [465,471,479,479,0],[462,471,479,480,1],[442,443,472,472,1],[443,443,456,457,0],[452,456,461,461,0],
  [454,459,461,463,1],[459,459,465,468,0],[450,459,465,465,1],[450,458,460,477,1],[444,458,464,464,0],
  [460,464,466,474,0],[463,466,471,473,0],[465,465,471,471,1],[455,461,466,467,1],[411,435,461,461,1],
  [426,435,449,487,0],[440,440,449,451,1],[440,440,447,447,0],[437,439,447,447,1],[433,439,445,450,0],
  [391,411,445,445,1],[362,362,411,429,1],[362,362,370,371,0],[368,376,380,380,0],[373,379,390,390,0],
  [380,384,390,396,1],[379,384,430,432,0],[364,364,430,430,1],[348,353,364,364,1],[348,348,354,354,1],
  [337,341,348,348,1],[315,336,341,349,1],[303,328,336,336,1],[309,309,329,334,1],[303,303,310,314,1],
  [288,292,303,303,1],[276,279,292,292,1],[279,279,303,303,0],[272,292,303,322,1],[255,257,292,292,1],
  [257,257,264,271,0],[254,260,264,268,1],[245,249,261,261,1],[210,224,250,266,1],[193,194,224,229,1],
  [171,173,195,197,1],[153,158,173,177,1],[157,158,168,168,0],[153,161,169,169,1],[161,161,168,188,0],
  [162,168,174,183,0],[164,173,174,187,0],[174,174,189,189,0],[183,188,193,196,1],[185,187,192,195,0],
  [177,187,192,208,1],[177,187,207,216,0],[200,200,207,207,1],[192,201,203,204,0],[195,198,203,206,1],
  [183,187,199,202,1],[177,187,199,202,0],[173,191,198,203,1],[183,191,230,234,0],[218,229,230,233,1],
  [225,227,228,232,1],[227,229,243,245,0],[230,243,303,303,0],[289,303,315,327,0],[312,315,320,349,0],
  [297,297,320,320,1],[293,293,298,307,1],[278,293,295,295,0],[295,295,309,322,0],[309,309,346,358,0],
  [340,346,360,369,0],[348,348,360,360,1],[343,343,349,349,1],[336,341,343,348,1],[322,341,356,368,0],
  [347,356,376,386,0],[353,355,376,376,1],[355,355,361,361,0],[348,351,363,363,1],[347,351,352,362,0],
  [337,351,386,392,0],[354,372,386,386,1],[367,372,374,398,0],[368,374,382,385,0],[379,382,387,390,0],
  [368,376,387,387,1],[351,361,376,376,1],[361,361,373,382,0],[338,341,373,388,1],[322,325,342,347,1],
  [323,325,337,339,0],[331,334,337,343,1],[318,318,335,335,1]
];

const dates = [
  ['15', 73], ['18', 117], ['20', 152], ['22', 205], ['25', 249], ['27', 284], ['29', 337], ['Jul', 381],
  ['4', 416], ['6', 469], ['9', 513], ['11', 548], ['13', 601], ['16', 645], ['18', 680], ['25', 812],
  ['27', 865], ['29', 909], ['Ago', 944], ['3', 997], ['6', 1041], ['8', 1076], ['10', 1129], ['13', 1173]
];

const events = [
  [852, 'us'], [870, 'us'], [896, 'us'], [953, 'us'], [1006, 'gb'], [1001, 'gb'],
  [1028, 'us'], [1133, 'us'], [1164, 'gb'], [1160, 'gb'], [1155, 'gb']
];

const firstX = 38;
const step = 4.4;

document.getElementById('candles-layer').innerHTML = candles.map(([high, top, bottom, low, up], i) => {
  const x = Math.floor(firstX + i * step);
  return `<g class="${up ? 'up' : 'dn'}"><line x1="${x + 0.5}" x2="${x + 0.5}" y1="${high}" y2="${low}"/>` +
    `<rect x="${x - 1}" y="${top}" width="3" height="${Math.max(bottom - top, 1)}"/></g>`;
}).join('');

// price labels go every 0,005 from 1,32500 down
let labels = '';
for (let i = 0; i < 15; i++) {
  const price = (1.325 - i * 0.005).toFixed(5).replace('.', ',');
  labels += `<text x="1226" y="${Math.round(78 + i * 35.7)}">${price}</text>`;
}
document.getElementById('prices').innerHTML = labels;

document.getElementById('dates').innerHTML = dates.map(([text, x]) =>
  `<text x="${x}" y="595">${text}</text>`).join('');

document.getElementById('events').innerHTML = events.map(([x, country]) => {
  const ring = `<circle cx="${x}" cy="574" r="6" fill="#f0f0f4" stroke="#cf3354"/>`;
  if (country === 'us') {
    return ring + `<path d="M${x - 4} 574h8M${x - 4} 576.500h7M${x} 571.500h4" stroke="#d8384e"/>` +
      `<rect x="${x - 4}" y="570" width="4" height="4" fill="#3553b5" stroke="none"/>`;
  }
  return ring + `<circle cx="${x}" cy="574" r="4" fill="#4a62b0" stroke="none"/>` +
    `<path d="M${x} 570v8M${x - 4} 574h8" stroke="#fff" stroke-width="2"/>` +
    `<path d="M${x} 570v8M${x - 4} 574h8M${x - 3} 571l6 6" stroke="#d8384e"/>`;
}).join('');
```
